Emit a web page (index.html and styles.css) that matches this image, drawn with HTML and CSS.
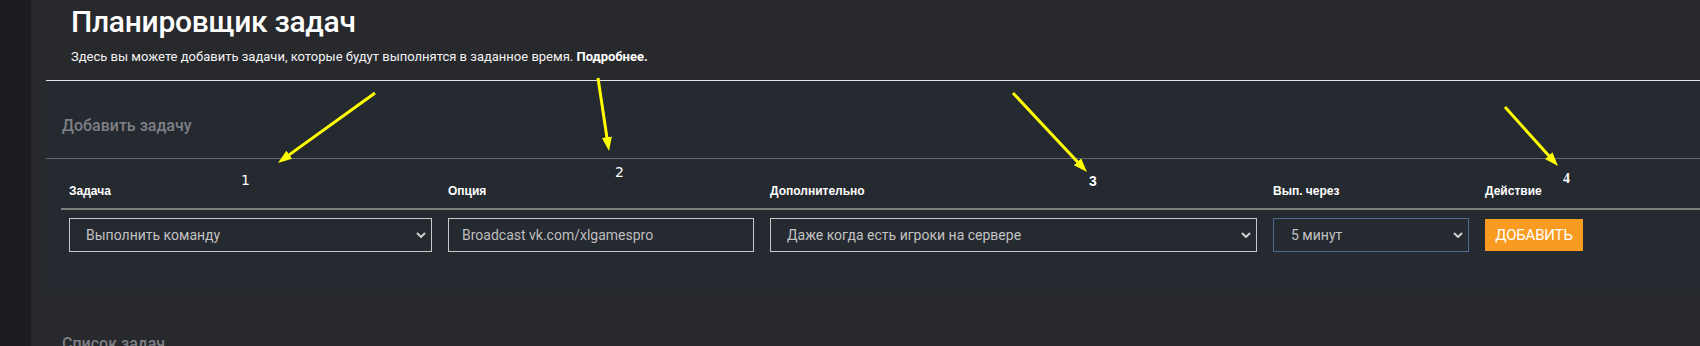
FILE: index.html
```html
<!DOCTYPE html>
<html lang="ru">
<head>
<meta charset="utf-8">
<title>Планировщик задач</title>
<link rel="stylesheet" href="styles.css">
</head>
<body>
<div class="app">
  <aside class="sidebar"></aside>
  <main class="main">
    <header class="page-head">
      <h1 class="page-title">Планировщик задач</h1>
      <p class="page-desc">Здесь вы можете добавить задачи, которые будут выполнятся в заданное время. <b>Подробнее.</b></p>
    </header>
    <section class="card">
      <h2 class="card-title">Добавить задачу</h2>
      <div class="task-form">
        <div class="th">Задача</div>
        <div class="th">Опция</div>
        <div class="th">Дополнительно</div>
        <div class="th">Вып. через</div>
        <div class="th">Действие</div>

        <div class="td">
          <div class="select"><span>Выполнить команду</span><svg class="chev" viewBox="0 0 10 6"><path d="M1 1 L5 5 L9 1"/></svg></div>
        </div>
        <div class="td">
          <div class="input">Broadcast vk.com/xlgamespro</div>
        </div>
        <div class="td">
          <div class="select"><span>Даже когда есть игроки на сервере</span><svg class="chev" viewBox="0 0 10 6"><path d="M1 1 L5 5 L9 1"/></svg></div>
        </div>
        <div class="td">
          <div class="select select-focus"><span>5 минут</span><svg class="chev" viewBox="0 0 10 6"><path d="M1 1 L5 5 L9 1"/></svg></div>
        </div>
        <div class="td">
          <button class="btn" type="button">ДОБАВИТЬ</button>
        </div>
      </div>
    </section>
    <h2 class="section-title">Список задач</h2>
  </main>

  <svg class="annot" viewBox="0 0 1700 346" width="1700" height="346">
    <defs>
      <marker id="ah" markerUnits="userSpaceOnUse" markerWidth="14" markerHeight="10" refX="2" refY="5" orient="auto">
        <path d="M0,0 L14,5 L0,10 z" fill="#ffff00"/>
      </marker>
    </defs>
    <line x1="375" y1="93" x2="287.7" y2="155.9" class="arr" marker-end="url(#ah)"/>
    <line x1="598" y1="78" x2="607.2" y2="139.1" class="arr" marker-end="url(#ah)"/>
    <line x1="1013" y1="93" x2="1078.8" y2="163.2" class="arr" marker-end="url(#ah)"/>
    <line x1="1505" y1="107" x2="1550" y2="157.1" class="arr" marker-end="url(#ah)"/>
    <text x="241" y="185" class="num">1</text>
    <text x="615" y="177" class="num">2</text>
    <text x="1089" y="186" class="num num-bold">3</text>
    <text x="1563" y="183" class="num num-serif">4</text>
  </svg>
</div>
</body>
</html>
```

FILE: styles.css
```css
html, body {
  margin: 0;
  padding: 0;
}

body {
  background: #27292d;
  width: 1700px;
  height: 346px;
  overflow: hidden;
  font-family: Roboto, "Noto Sans", sans-serif;
}

.app {
  position: relative;
  display: flex;
  width: 1700px;
  height: 346px;
}

.sidebar {
  width: 31px;
  flex-shrink: 0;
  background: #1b1d21;
}

.main {
  flex: 1;
  padding-left: 15px;
  min-width: 0;
}

.page-head {
  padding: 4px 0 16px 25px;
  border-bottom: 1px solid #e4e4e4;
}

.page-title {
  margin: 0;
  font: 500 30px/35px Roboto, sans-serif;
  letter-spacing: -0.3px;
  color: #ffffff;
}

.page-desc {
  margin: 10px 0 0;
  font: 400 13px/15px Roboto, sans-serif;
  color: #f4f4f4;
}

.page-desc b {
  font-weight: 700;
  color: #ffffff;
}

.card {
  background: #252930;
}

.card-title {
  margin: 0;
  padding: 35px 16px 23px;
  font: 500 16px/19px Roboto, sans-serif;
  color: #7e8085;
  border-bottom: 1px solid #66686c;
}

.task-form {
  margin-left: 15px;
  display: grid;
  grid-template-columns: 379px 322px 503px 212px 1fr;
}

.th {
  padding: 25px 8px 10px;
  font: 700 12px/14px "Liberation Sans", Arial, sans-serif;
  color: #ffffff;
  border-bottom: 2px solid #7e7e7e;
}

.td {
  padding: 8px 8px 41px;
  display: flex;
  align-items: flex-start;
}

.select,
.input {
  box-sizing: border-box;
  width: 100%;
  height: 34px;
  display: flex;
  align-items: center;
  border: 1px solid #c9c9c9;
  font: 400 14px Roboto, sans-serif;
  color: #c2c2c2;
}

.select {
  justify-content: space-between;
  padding: 0 5px 0 16px;
}

.select-focus {
  border-color: #4b6b90;
  padding-left: 17px;
}

.input {
  padding: 0 13px;
  color: #bebebe;
}

.chev {
  width: 10px;
  height: 6px;
  fill: none;
  stroke: #cfcfcf;
  stroke-width: 2;
}

.btn {
  margin-top: 1px;
  width: 98px;
  height: 32px;
  padding: 0;
  border: none;
  background: #f99b20;
  color: #ffffff;
  font: 400 15px Roboto, sans-serif;
  letter-spacing: -0.2px;
  text-align: center;
}

.section-title {
  margin: 41px 0 0 16px;
  font: 500 16px/19px Roboto, sans-serif;
  color: #7e8085;
}

.annot {
  position: absolute;
  top: 0;
  left: 0;
  pointer-events: none;
}

.arr {
  stroke: #ffff00;
  stroke-width: 3;
}

.num {
  font: 400 14px "DejaVu Sans", sans-serif;
  fill: #ffffff;
}

.num-bold {
  font-weight: 700;
  font-family: "Liberation Sans", sans-serif;
}

.num-serif {
  font-family: "Liberation Serif", serif;
  font-weight: 700;
}
```
